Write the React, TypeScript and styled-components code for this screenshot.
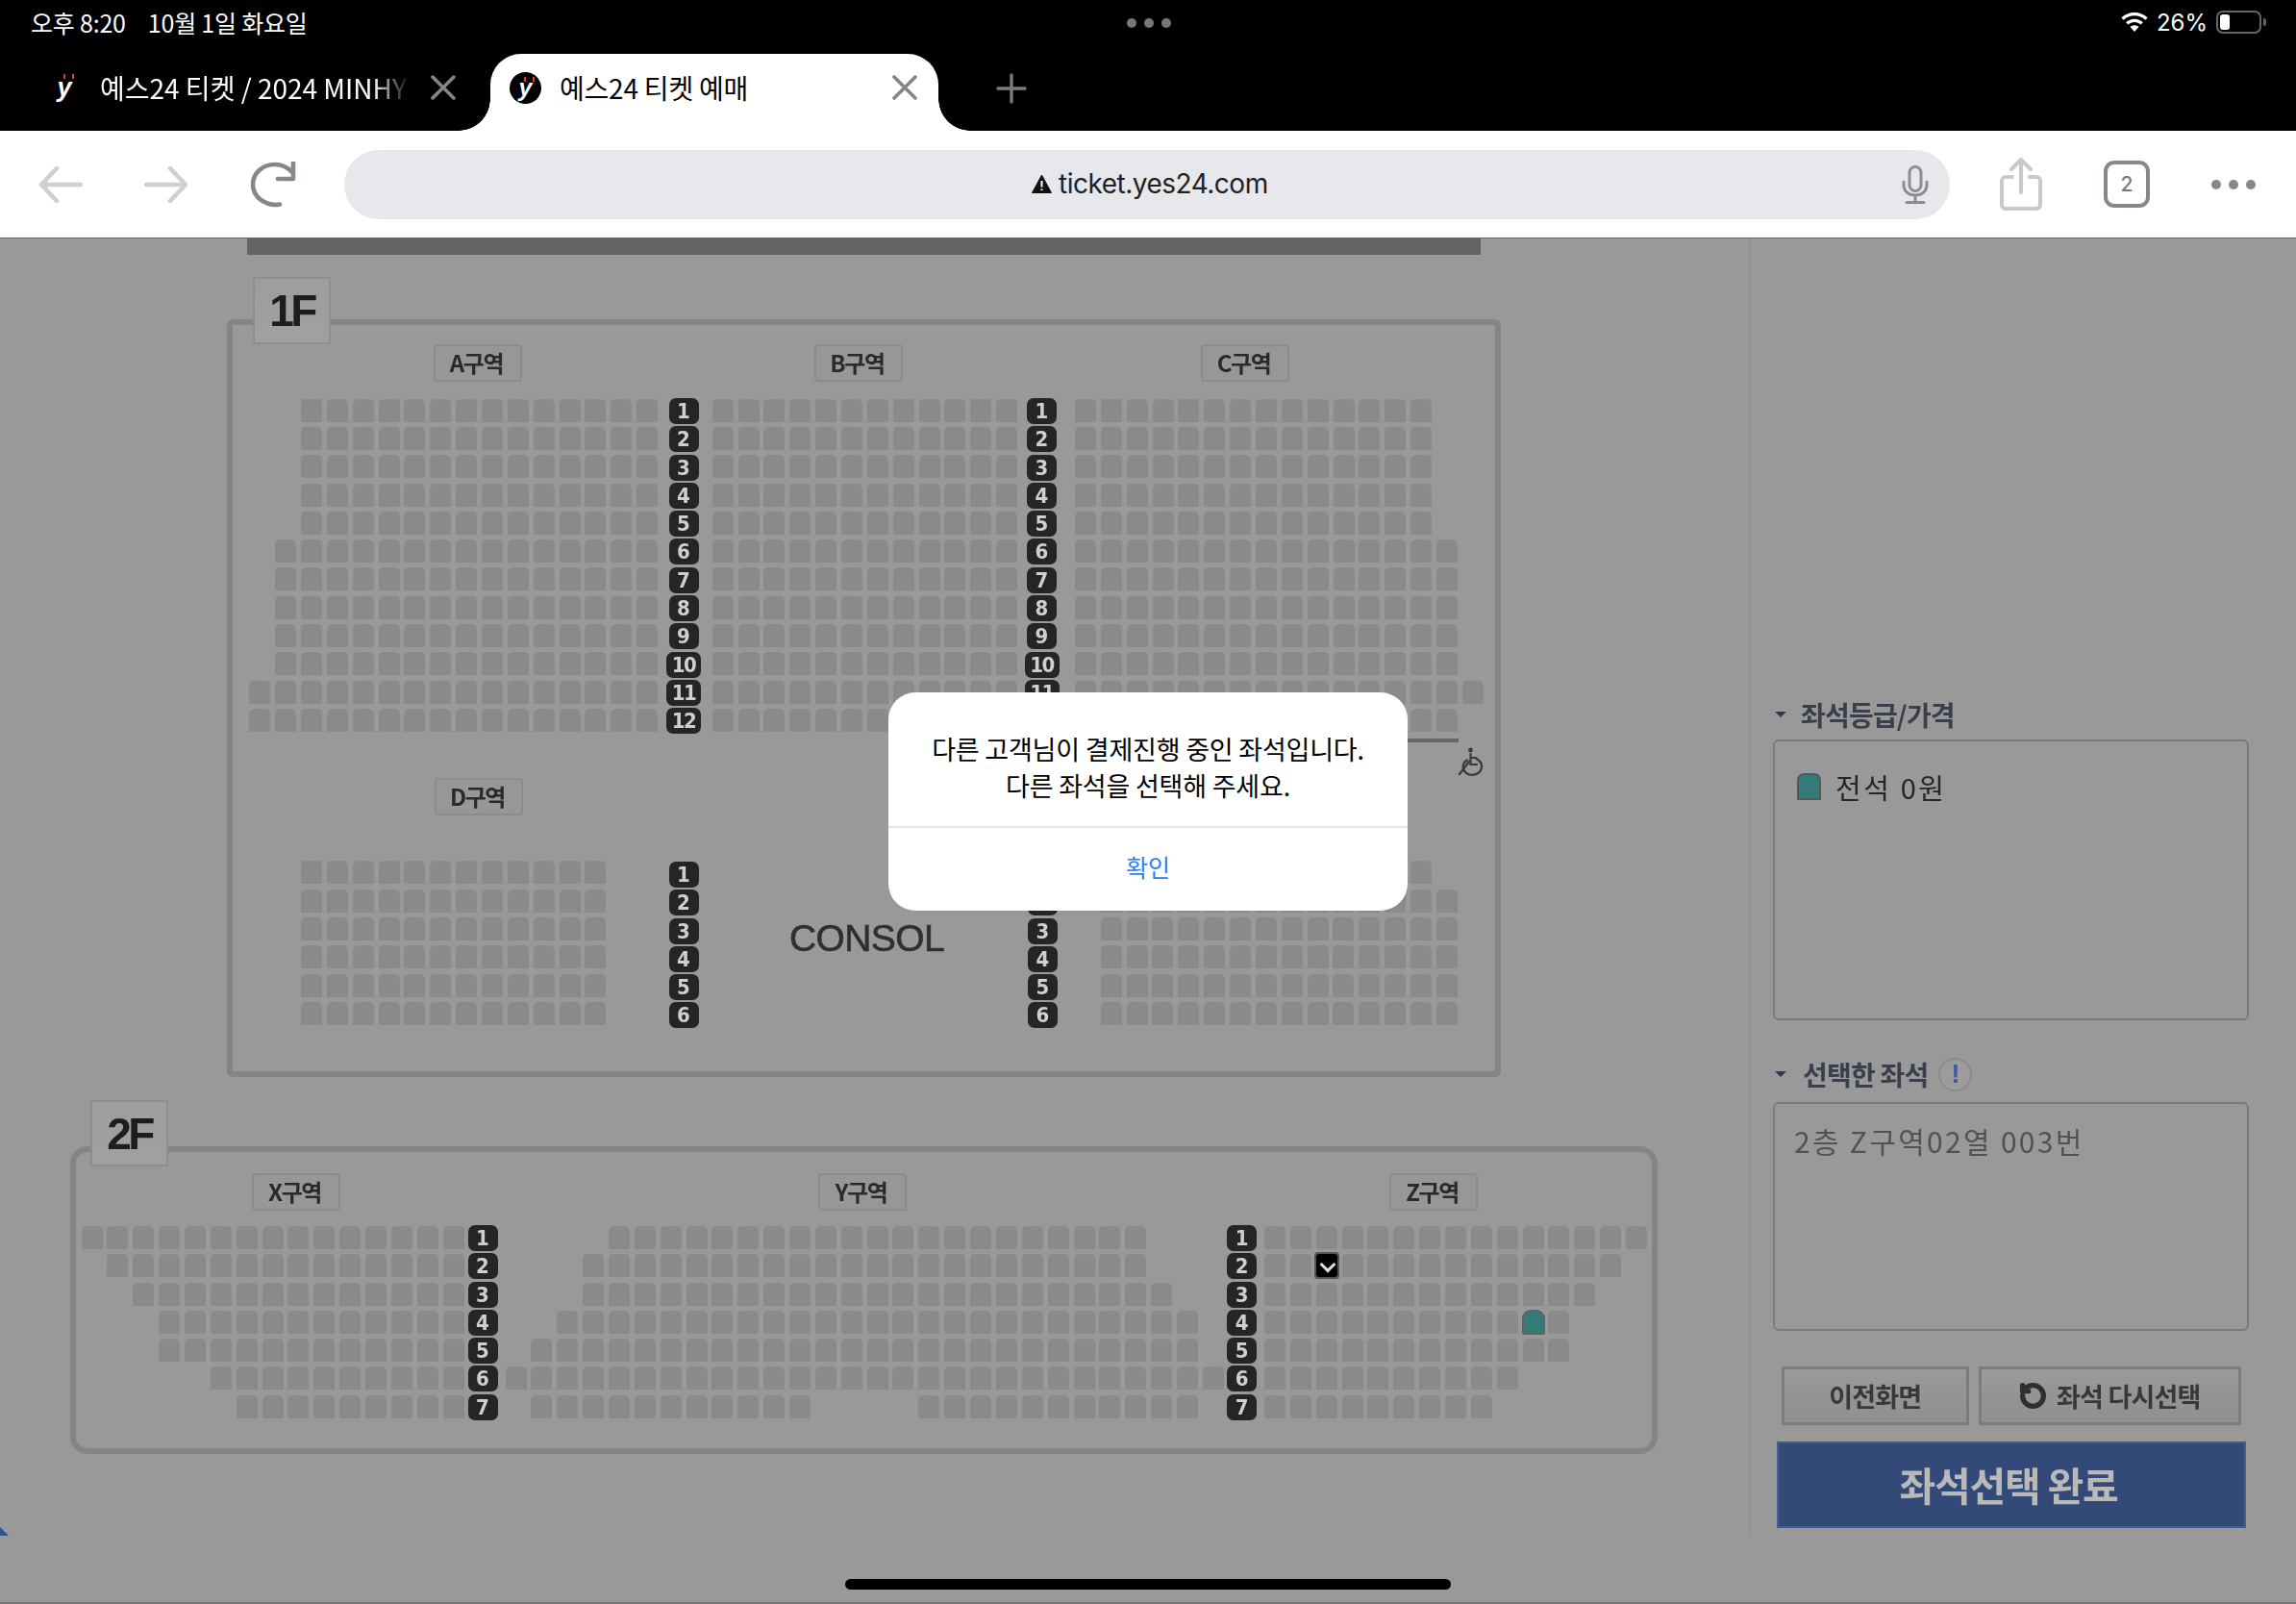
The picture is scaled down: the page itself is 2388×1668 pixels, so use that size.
import React from "react";
import styled, { createGlobalStyle } from "styled-components";
import { RotateCcw } from "lucide-react";

const KR = `"Noto Sans CJK KR", "Noto Sans", sans-serif`;
const SEAT_W = 22;
const SEAT_GAP_X = 4.87;
const SEAT_H = 24;
const SEAT_GAP_Y = 5.3;
const CANVAS_TOP = 248;

const GlobalStyle = createGlobalStyle`
  html, body { margin: 0; padding: 0; background: #999; }
  * { box-sizing: border-box; }
`;

// seat rows: "." empty, "#" seat, "v" taken by the user, "t" available
const run = (offset: number, count: number) => ".".repeat(offset) + "#".repeat(count);
const times = (n: number, row: string) => Array.from({ length: n }, () => row);

const blocks = [
  { x: 259.3, y: 414.7, rows: [...times(5, run(2, 14)), ...times(5, run(1, 15)), ...times(2, run(0, 16))] },
  { x: 740.7, y: 414.7, rows: times(12, run(0, 12)) },
  { x: 1118, y: 414.7, rows: [...times(5, run(0, 14)), ...times(5, run(0, 15)), run(0, 16), run(0, 15)] },
  { x: 313, y: 895.4, rows: times(6, run(0, 12)) },
  { x: 1144.7, y: 895.4, rows: [run(0, 13), ...times(5, run(0, 14))] },
  { x: 84.5, y: 1275, rows: [run(0, 15), run(1, 14), run(2, 13), run(3, 12), run(3, 12), run(5, 10), run(6, 9)] },
  {
    x: 525.6,
    y: 1275,
    rows: [run(4, 21), run(3, 22), run(3, 23), run(2, 25), run(1, 26), run(0, 28), run(1, 11) + run(4, 11)],
  },
  {
    x: 1315,
    y: 1275,
    rows: [run(0, 15), "##v" + "#".repeat(11), run(0, 13), "#".repeat(10) + "t#", run(0, 12), run(0, 10), run(0, 9)],
  },
];

const badgeColumns = [
  { cx: 711, y: 414, count: 12 },
  { cx: 1083.5, y: 414, count: 12 },
  { cx: 711, y: 896, count: 6 },
  { cx: 1084.5, y: 896, count: 6 },
  { cx: 502, y: 1274, count: 7 },
  { cx: 1291.7, y: 1274, count: 7 },
];

const labels = [
  { x: 451, y: 358, text: "A구역" },
  { x: 847, y: 358, text: "B구역" },
  { x: 1249, y: 358, text: "C구역" },
  { x: 452, y: 809, text: "D구역" },
  { x: 262, y: 1220, text: "X구역" },
  { x: 851, y: 1220, text: "Y구역" },
  { x: 1445, y: 1220, text: "Z구역" },
];

const App: React.FC = () => {
  return (
    <Screen>
      <GlobalStyle />
      <TopArea>
        <StatusBar>
          <StatusText>오후 8:20</StatusText>
          <StatusText>10월 1일 화요일</StatusText>
          <CenterDots>
            <i />
            <i />
            <i />
          </CenterDots>
          <StatusRight>
            <WifiIcon />
            <BatteryText>26%</BatteryText>
            <Battery>
              <BatteryFill />
            </Battery>
          </StatusRight>
        </StatusBar>
        <TabRow>
          <InactiveTab>
            <Favicon>y</Favicon>
            <TabTitle>예스24 티켓 / 2024 MINHYUN LIVE</TabTitle>
            <CloseIcon />
          </InactiveTab>
          <ActiveTab>
            <Favicon $round>y</Favicon>
            <ActiveTitle>예스24 티켓 예매</ActiveTitle>
            <CloseIcon />
          </ActiveTab>
          <AddTab>
            <svg width="32" height="32" viewBox="0 0 32 32">
              <path d="M16 2v28M2 16h28" stroke="#7b7b7b" strokeWidth="3.4" strokeLinecap="round" />
            </svg>
          </AddTab>
        </TabRow>
      </TopArea>

      <Toolbar>
        <NavGroup>
          <svg width="46" height="38" viewBox="0 0 46 38" fill="none">
            <path d="M44 19H3M19 2 3 19l16 17" stroke="#cfcfcf" strokeWidth="4.6" strokeLinecap="round" strokeLinejoin="round" />
          </svg>
          <svg width="46" height="38" viewBox="0 0 46 38" fill="none">
            <path d="M2 19h41M27 2l16 17-16 17" stroke="#cfcfcf" strokeWidth="4.6" strokeLinecap="round" strokeLinejoin="round" />
          </svg>
          <svg width="48" height="48" viewBox="0 0 48 48" fill="none">
            <path
              d="M31 44.5C18 47 3 38 3 24 3 12 13 3 26 3c7 0 13 3 18 8"
              stroke="#84888d"
              strokeWidth="4.6"
              strokeLinecap="round"
            />
            <path d="M45 1v17H29" stroke="#84888d" strokeWidth="4.6" strokeLinecap="round" strokeLinejoin="round" />
          </svg>
        </NavGroup>
        <AddressBar>
          <Address>
            <svg width="21" height="20" viewBox="0 0 21 20">
              <path d="M10.5 1 20.5 19.5H.5z" fill="#111" stroke="#111" strokeLinejoin="round" />
              <path d="M10.5 7v6.5M10.5 15.5v1.5" stroke="#fff" strokeWidth="2" />
            </svg>
            <AddressText>ticket.yes24.com</AddressText>
          </Address>
          <MicSlot>
            <svg width="28" height="40" viewBox="0 0 28 40" fill="none" stroke="#8a8e93" strokeWidth="3" strokeLinecap="round">
              <rect x="8" y="1.5" width="12" height="25" rx="6" />
              <path d="M2 17v3c0 7 5 11 12 11s12-4 12-11v-3M14 31v7M5 38.500h18" />
            </svg>
          </MicSlot>
        </AddressBar>
        <ActionGroup>
          <svg width="44" height="55" viewBox="0 0 44 55" fill="none" stroke="#c9c9c9" strokeWidth="4" strokeLinecap="round" strokeLinejoin="round">
            <path d="M13 20H6a4 4 0 0 0-4 4v25a4 4 0 0 0 4 4h32a4 4 0 0 0 4-4V24a4 4 0 0 0-4-4h-7" />
            <path d="M22 36V3M12 12l10-10 10 10" />
          </svg>
          <TabCount>2</TabCount>
          <MoreDots>
            <i />
            <i />
            <i />
          </MoreDots>
        </ActionGroup>
      </Toolbar>

      <Content>
        <MapCanvas>
          <StageBar />
          <FloorBox $x={236} $y={332} $w={1325} $h={788} />
          <FloorTag $x={263} $y={288} $w={81} $h={70}>1F</FloorTag>
          <FloorBox $x={73} $y={1192} $w={1651} $h={320} $radius={18} />
          <FloorTag $x={94} $y={1144} $w={81} $h={69}>2F</FloorTag>

          {labels.map((l) => (
            <SectionLabel key={l.text} $x={l.x} $y={l.y}>
              {l.text}
            </SectionLabel>
          ))}

          {blocks.map((block, i) => (
            <SeatBlock key={i} $x={block.x} $y={block.y}>
              {block.rows.map((row, r) => (
                <SeatRow key={r}>
                  {row.split("").map((kind, s) => (
                    <Seat key={s} $kind={kind} />
                  ))}
                </SeatRow>
              ))}
            </SeatBlock>
          ))}

          {badgeColumns.map((col, i) => (
            <BadgeColumn key={i} $cx={col.cx} $y={col.y}>
              {Array.from({ length: col.count }, (_, n) => (
                <RowBadge key={n} $wide={n >= 9}>
                  {n + 1}
                </RowBadge>
              ))}
            </BadgeColumn>
          ))}

          <Consol>CONSOL</Consol>
          <AisleLine />
          <Wheelchair>
            <svg width="30" height="31" viewBox="0 0 30 31" fill="none" stroke="#3a3a3a" strokeWidth="2.2" strokeLinecap="round">
              <circle cx="14.500" cy="3" r="2.400" fill="#3a3a3a" stroke="none" />
              <path d="M14.500 7v11h6.500M14.500 11h6" />
              <path d="M11 13.500c-4.500 2-6.500 9-1 13.500 6 4 15 1 16-6 .500-4-2-7-5-8.500" />
              <path d="M13 15 3 28" />
            </svg>
          </Wheelchair>
          <CornerMark />
        </MapCanvas>

        <SidePanel>
          <SectionHead>
            <Caret />
            <HeadTitle>좌석등급/가격</HeadTitle>
          </SectionHead>
          <InfoBox $h={292} $pad="33px 23px">
            <GradeRow>
              <GradeSwatch />
              <GradeText>전석 0원</GradeText>
            </GradeRow>
          </InfoBox>
          <SectionHead $top={38} $h={36} $bottom={11}>
            <Caret />
            <HeadTitle $tight>선택한 좌석</HeadTitle>
            <InfoMark>!</InfoMark>
          </SectionHead>
          <InfoBox $h={238} $pad="18px 20px">
            <SelectedText>2층 Z구역02열 003번</SelectedText>
          </InfoBox>
          <ButtonRow>
            <GrayButton $w={194.5}>이전화면</GrayButton>
            <GrayButton $w={272.6}>
              <RotateCcw size={29} strokeWidth={4.4} color="#2f2f33" />
              좌석 다시선택
            </GrayButton>
          </ButtonRow>
          <DoneButton>좌석선택 완료</DoneButton>
        </SidePanel>
      </Content>

      <Overlay>
        <Alert>
          <AlertBody>
            <AlertLine>다른 고객님이 결제진행 중인 좌석입니다.</AlertLine>
            <AlertLine>다른 좌석을 선택해 주세요.</AlertLine>
          </AlertBody>
          <AlertAction>확인</AlertAction>
        </Alert>
      </Overlay>
      <HomeIndicator />
    </Screen>
  );
};

const WifiIcon = () => (
  <svg width="28" height="20" viewBox="0 0 28 20" fill="#fff">
    <path d="M14 0C8.800 0 4 2 .4 5.400l2.300 2.400C5.700 5 9.700 3.300 14 3.300s8.300 1.700 11.300 4.500l2.300-2.400C24 2 19.200 0 14 0z" />
    <path d="M14 6.700c-3.400 0-6.500 1.300-8.900 3.500l2.300 2.400C9.200 11 11.500 10 14 10s4.800 1 6.600 2.600l2.300-2.400C20.500 8 17.400 6.700 14 6.700z" />
    <path d="M14 13.300c-1.700 0-3.300.7-4.500 1.800L14 20l4.500-4.900c-1.200-1.100-2.800-1.800-4.500-1.800z" />
  </svg>
);

const CloseIcon = () => (
  <svg width="26" height="26" viewBox="0 0 26 26">
    <path d="M2 2l22 22M24 2 2 24" stroke="#858585" strokeWidth="3.600" strokeLinecap="round" />
  </svg>
);

const Screen = styled.div`
  position: relative;
  width: 2388px;
  height: 1668px;
  display: flex;
  flex-direction: column;
  overflow: hidden;
  background: #999;
  border-bottom: 2px solid #777;
  font-family: ${KR};
`;

const TopArea = styled.header`
  height: 136px;
  background: #000;
  display: flex;
  flex-direction: column;
`;

const StatusBar = styled.div`
  position: relative;
  height: 46px;
  display: flex;
  align-items: center;
  gap: 23px;
  padding: 0 36px 0 32px;
`;

const StatusText = styled.span`
  color: #fff;
  font-size: 25px;
  letter-spacing: -0.2px;
`;

const CenterDots = styled.div`
  position: absolute;
  left: 1172px;
  top: 19px;
  display: flex;
  gap: 8px;

  i {
    width: 10px;
    height: 10px;
    border-radius: 50%;
    background: #777;
  }
`;

const StatusRight = styled.div`
  margin-left: auto;
  display: flex;
  align-items: center;
`;

const BatteryText = styled.span`
  color: #fff;
  font: 24px "Inter", "Liberation Sans", sans-serif;
  margin: 0 9px 0 9px;
`;

const Battery = styled.div`
  position: relative;
  width: 47px;
  height: 24px;
  border: 2px solid #666;
  border-radius: 7px;
  padding: 2px;

  &::after {
    content: "";
    position: absolute;
    right: -7px;
    top: 6px;
    width: 3px;
    height: 8px;
    border-radius: 0 3px 3px 0;
    background: #666;
  }
`;

const BatteryFill = styled.div`
  width: 10px;
  height: 100%;
  border-radius: 3px;
  background: #fff;
`;

const TabRow = styled.div`
  flex: 1;
  display: flex;
  padding-top: 10px;
`;

const InactiveTab = styled.div`
  width: 510px;
  display: flex;
  align-items: center;
  padding: 0 36px 10px 56px;
  color: #fff;
`;

const Favicon = styled.span<{ $round?: boolean }>`
  position: relative;
  flex: none;
  width: ${(p) => (p.$round ? "33px" : "22px")};
  height: ${(p) => (p.$round ? "33px" : "30px")};
  border-radius: 50%;
  background: ${(p) => (p.$round ? "#000" : "transparent")};
  color: #fff;
  font: italic 700 ${(p) => (p.$round ? "25px" : "27px")} / 28px "Liberation Sans", sans-serif;
  display: flex;
  align-items: center;
  justify-content: center;

  &::before {
    content: "";
    position: absolute;
    left: ${(p) => (p.$round ? "15px" : "10px")};
    top: ${(p) => (p.$round ? "5px" : "1px")};
    width: 7px;
    height: 5px;
    border-left: 2px solid #d8452e;
    border-right: 2px solid #d8452e;
  }
`;

const TabTitle = styled.div`
  width: 323px;
  margin: 0 22px 0 26px;
  font-size: 28px;
  white-space: nowrap;
  overflow: hidden;
  -webkit-mask-image: linear-gradient(to right, #000 88%, transparent);
  mask-image: linear-gradient(to right, #000 88%, transparent);
`;

const ActiveTab = styled.div`
  position: relative;
  width: 466px;
  display: flex;
  align-items: center;
  padding: 0 22px 10px 20px;
  background: #fff;
  border-radius: 32px 32px 0 0;
  color: #000;

  &::before,
  &::after {
    content: "";
    position: absolute;
    bottom: 0;
    width: 33px;
    height: 33px;
  }

  &::before {
    left: -33px;
    background: radial-gradient(circle at 0 0, transparent 32.500px, #fff 33px);
  }

  &::after {
    right: -33px;
    background: radial-gradient(circle at 100% 0, transparent 32.500px, #fff 33px);
  }
`;

const ActiveTitle = styled.div`
  flex: 1;
  margin-left: 19px;
  font-size: 28px;
  letter-spacing: -0.2px;
  white-space: nowrap;
`;

const AddTab = styled.div`
  margin: 0 0 0 60px;
  padding-top: 20px;
`;

const Toolbar = styled.div`
  height: 112px;
  flex: none;
  background: #fff;
  display: flex;
  align-items: center;
  padding: 8px 42px 0 40px;
  border-bottom: 1px solid #666;
`;

const NavGroup = styled.div`
  display: flex;
  align-items: center;
  gap: 64px;
  width: 318px;
  margin-top: -8px;
`;

const AddressBar = styled.div`
  position: relative;
  width: 1672px;
  height: 72px;
  margin-top: -8px;
  border-radius: 36px;
  background: #e7e8ec;
  display: flex;
  align-items: center;
  justify-content: center;
`;

const Address = styled.div`
  display: flex;
  align-items: center;
  gap: 7px;
  margin-left: 6px;
  margin-top: -2px;
`;

const AddressText = styled.span`
  font: 28px "Inter", "Liberation Sans", sans-serif;
  color: #222;
  letter-spacing: -0.5px;
`;

const MicSlot = styled.div`
  position: absolute;
  right: 22px;
  top: 16px;
`;

const ActionGroup = styled.div`
  display: flex;
  align-items: center;
  margin: -8px 0 0 52px;
  gap: 64px;
`;

const TabCount = styled.div`
  width: 48px;
  height: 49px;
  border: 4px solid #85898e;
  border-radius: 11px;
  display: flex;
  align-items: center;
  justify-content: center;
  color: #777b80;
  font: 500 21px "Inter", "Liberation Sans", sans-serif;
`;

const MoreDots = styled.div`
  display: flex;
  gap: 8px;

  i {
    width: 10px;
    height: 10px;
    border-radius: 50%;
    background: #84888d;
  }
`;

const Content = styled.main`
  height: 1349px;
  flex: none;
  display: flex;
`;

const MapCanvas = styled.div`
  position: relative;
  width: 1819px;
  flex: none;
  filter: blur(0.6px);
`;

const StageBar = styled.div`
  position: absolute;
  left: 257px;
  top: 0;
  width: 1283px;
  height: 17px;
  background: #636363;
`;

const FloorBox = styled.div<{ $x: number; $y: number; $w: number; $h: number; $radius?: number }>`
  position: absolute;
  left: ${(p) => p.$x}px;
  top: ${(p) => p.$y - CANVAS_TOP}px;
  width: ${(p) => p.$w}px;
  height: ${(p) => p.$h}px;
  border: 6px solid #858585;
  border-radius: ${(p) => p.$radius ?? 6}px;
`;

const FloorTag = styled.div<{ $x: number; $y: number; $w: number; $h: number }>`
  position: absolute;
  left: ${(p) => p.$x}px;
  top: ${(p) => p.$y - CANVAS_TOP}px;
  width: ${(p) => p.$w}px;
  height: ${(p) => p.$h}px;
  border: 2px solid #8e8e8e;
  background: linear-gradient(#9d9d9d, #a0a0a0);
  color: #1d1d1d;
  font: 700 46px "Liberation Sans", sans-serif;
  letter-spacing: -3.500px;
  display: flex;
  align-items: center;
  justify-content: center;
`;

const SectionLabel = styled.div<{ $x: number; $y: number }>`
  position: absolute;
  left: ${(p) => p.$x}px;
  top: ${(p) => p.$y - CANVAS_TOP}px;
  width: 92px;
  height: 39px;
  border: 2px solid #8b8b8b;
  border-radius: 4px;
  background: #979797;
  color: #2a2a2a;
  font-size: 24px;
  font-weight: 700;
  letter-spacing: -1.400px;
  padding: 0 3px 3px 0;
  display: flex;
  align-items: center;
  justify-content: center;
`;

const SeatBlock = styled.div<{ $x: number; $y: number }>`
  position: absolute;
  left: ${(p) => p.$x}px;
  top: ${(p) => p.$y - CANVAS_TOP}px;
  display: flex;
  flex-direction: column;
  gap: ${SEAT_GAP_Y}px;
`;

const SeatRow = styled.div`
  display: flex;
  gap: ${SEAT_GAP_X}px;
`;

const seatColor = (kind: string) => {
  if (kind === ".") return "transparent";
  if (kind === "v") return "#000";
  if (kind === "t") return "#347a78";
  return "#8a8a8a";
};

const Seat = styled.div<{ $kind: string }>`
  position: relative;
  flex: none;
  width: ${SEAT_W}px;
  height: ${SEAT_H}px;
  border-radius: ${(p) => (p.$kind === "v" ? "2px" : p.$kind === "t" ? "8px 8px 1px 1px" : "5px 5px 1px 1px")};
  background: ${(p) => seatColor(p.$kind)};
  ${(p) => (p.$kind === "t" ? "outline: 2px solid #5c6464; outline-offset: -1px;" : "")}
  ${(p) => (p.$kind === "v" ? "outline: 2px solid #555; outline-offset: 0;" : "")}

  ${(p) =>
    p.$kind === "v"
      ? `&::after {
          content: "";
          position: absolute;
          left: 6px;
          top: 5px;
          width: 9px;
          height: 9px;
          border-right: 3px solid #ddd;
          border-bottom: 3px solid #ddd;
          transform: rotate(45deg);
        }`
      : ""}
`;

const BadgeColumn = styled.div<{ $cx: number; $y: number }>`
  position: absolute;
  left: ${(p) => p.$cx - 18}px;
  top: ${(p) => p.$y - CANVAS_TOP}px;
  width: 36px;
  display: flex;
  flex-direction: column;
  align-items: center;
  gap: 2.300px;
`;

const RowBadge = styled.div<{ $wide?: boolean }>`
  width: ${(p) => (p.$wide ? 36 : 31)}px;
  height: 27px;
  border-radius: 7px;
  background: #252525;
  color: #cfcfcf;
  font: 700 22px "DejaVu Sans", sans-serif;
  font-stretch: condensed;
  letter-spacing: ${(p) => (p.$wide ? "-1.500px" : "0")};
  display: flex;
  align-items: center;
  justify-content: center;
`;

const Consol = styled.div`
  position: absolute;
  left: 821px;
  top: 706px;
  color: #2f2f2f;
  font: 39px "Liberation Sans", sans-serif;
  letter-spacing: -0.6px;
  -webkit-text-stroke: 0.6px #2f2f2f;
`;

const AisleLine = styled.div`
  position: absolute;
  left: 1464px;
  top: 520px;
  width: 53px;
  height: 4px;
  background: #666;
`;

const Wheelchair = styled.div`
  position: absolute;
  left: 1515px;
  top: 529px;
`;

const CornerMark = styled.div`
  position: absolute;
  left: 0;
  bottom: 0;
  width: 0;
  height: 0;
  border-left: 9px solid #2e5389;
  border-top: 9px solid transparent;
`;

const SidePanel = styled.aside`
  flex: none;
  width: 569px;
  padding: 480px 0 0 23px;
  border-left: 2px solid #929292;
  filter: blur(0.4px);
  display: flex;
  flex-direction: column;
  align-items: flex-start;
`;

const SectionHead = styled.div<{ $top?: number; $h?: number; $bottom?: number }>`
  height: ${(p) => p.$h ?? 30}px;
  margin: ${(p) => p.$top ?? 0}px 0 ${(p) => p.$bottom ?? 11}px 2px;
  display: flex;
  align-items: center;
`;

const Caret = styled.i`
  width: 0;
  height: 0;
  border-left: 6px solid transparent;
  border-right: 6px solid transparent;
  border-top: 6px solid #343a4e;
`;

const HeadTitle = styled.span<{ $tight?: boolean }>`
  margin-left: ${(p) => (p.$tight ? "17px" : "15px")};
  color: #3a3f4e;
  font-size: 28px;
  font-weight: 700;
  letter-spacing: -0.8px;
`;

const InfoMark = styled.span`
  width: 35px;
  height: 35px;
  margin-left: 11px;
  border-radius: 50%;
  border: 2px solid #8a8a8a;
  background: #9c9c9c;
  color: #3f5d9c;
  font: 700 28px "Liberation Sans", sans-serif;
  display: flex;
  align-items: center;
  justify-content: center;
`;

const InfoBox = styled.div<{ $h: number; $pad: string }>`
  width: 495px;
  height: ${(p) => p.$h}px;
  padding: ${(p) => p.$pad};
  border: 2px solid #7b7b7b;
  border-radius: 6px;
`;

const GradeRow = styled.div`
  display: flex;
  align-items: center;
  gap: 15px;
`;

const GradeSwatch = styled.span`
  width: 25px;
  height: 28px;
  border-radius: 7px 7px 1px 1px;
  background: #347a78;
  border: 2px solid #4e5a5a;
`;

const GradeText = styled.span`
  color: #262626;
  font-size: 29px;
  letter-spacing: 2.600px;
  line-height: 28px;
`;

const SelectedText = styled.div`
  color: #525252;
  font-size: 30px;
  line-height: 40px;
  letter-spacing: 2.300px;
  white-space: nowrap;
`;

const ButtonRow = styled.div`
  display: flex;
  gap: 10.500px;
  margin: 37px 0 17px 9px;
`;

const GrayButton = styled.div<{ $w: number }>`
  width: ${(p) => p.$w}px;
  height: 61px;
  border: 3px solid #7c7c7c;
  background: linear-gradient(#9a9a9a, #8f8f8f);
  color: #38383c;
  font-size: 27px;
  font-weight: 700;
  letter-spacing: -0.800px;
  white-space: nowrap;
  display: flex;
  align-items: center;
  justify-content: center;
  gap: 10px;
`;

const DoneButton = styled.div`
  width: 488px;
  height: 90px;
  margin-left: 4px;
  border: 2px solid #43608f;
  background: #334a78;
  color: #b9b9b9;
  font-size: 41px;
  font-weight: 700;
  letter-spacing: -1.200px;
  padding: 0 6px 3px 0;
  display: flex;
  align-items: center;
  justify-content: center;
`;

const Overlay = styled.div`
  position: absolute;
  inset: 0;
  display: flex;
  align-items: center;
  justify-content: center;
`;

const Alert = styled.div`
  width: 540px;
  height: 227px;
  background: #fff;
  border-radius: 28px;
  display: flex;
  flex-direction: column;
`;

const AlertBody = styled.div`
  height: 141px;
  padding-top: 18px;
  border-bottom: 2px solid #e6e6e6;
  display: flex;
  flex-direction: column;
  align-items: center;
  justify-content: center;
`;

const AlertLine = styled.div`
  color: #000;
  font-size: 27px;
  line-height: 38.500px;
  letter-spacing: -0.200px;
  white-space: nowrap;
`;

const AlertAction = styled.div`
  flex: 1;
  padding-bottom: 6px;
  color: #2f7ef6;
  font-size: 25px;
  display: flex;
  align-items: center;
  justify-content: center;
`;

const HomeIndicator = styled.div`
  position: absolute;
  left: 879px;
  bottom: 13px;
  width: 630px;
  height: 11px;
  border-radius: 6px;
  background: #000;
`;

export default App;
